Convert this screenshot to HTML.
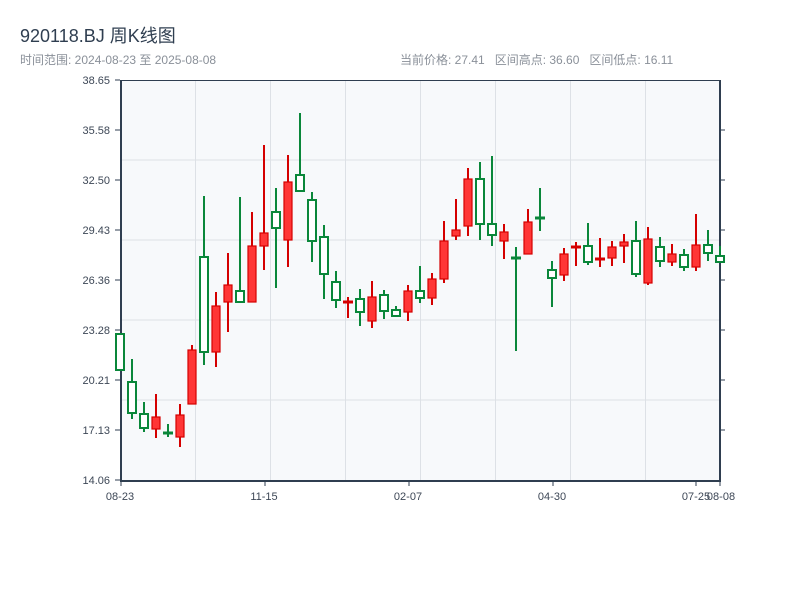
<!DOCTYPE html>
<html><head><meta charset="utf-8"><style>
body{margin:0;background:#fff;width:800px;height:600px;overflow:hidden;font-family:"Liberation Sans","Noto Sans CJK SC",sans-serif}
.t{position:absolute;left:20px;top:22px;font-size:18px;color:#2f3e50}
.s{position:absolute;left:20px;top:51px;font-size:12px;color:#8a9099}
.r{position:absolute;left:400px;top:51px;font-size:12px;color:#8a9099;white-space:pre}
svg{position:absolute;left:0;top:0}
</style></head><body>
<div class="t">920118.BJ 周K线图</div>
<div class="s">时间范围: 2024-08-23 至 2025-08-08</div>
<div class="r">当前价格: 27.41   区间高点: 36.60   区间低点: 16.11</div>
<svg width="800" height="600" font-family="Liberation Sans, sans-serif" font-size="11" fill="#3d4756">
<rect x="120" y="80" width="600" height="400" fill="#f7f9fb"/>
<g stroke="#dde1e6" stroke-width="1">
<line x1="120" y1="160" x2="720" y2="160"/><line x1="120" y1="240" x2="720" y2="240"/><line x1="120" y1="320" x2="720" y2="320"/><line x1="120" y1="400" x2="720" y2="400"/>
<line x1="195.5" y1="80" x2="195.5" y2="480"/><line x1="270.5" y1="80" x2="270.5" y2="480"/><line x1="345.5" y1="80" x2="345.5" y2="480"/><line x1="420.5" y1="80" x2="420.5" y2="480"/><line x1="495.5" y1="80" x2="495.5" y2="480"/><line x1="570.5" y1="80" x2="570.5" y2="480"/><line x1="645.5" y1="80" x2="645.5" y2="480"/>
</g>
<g stroke="#2f3e50" stroke-width="2" fill="none">
<line x1="121" y1="80" x2="121" y2="481"/><line x1="120" y1="481" x2="721" y2="481"/><line x1="720" y1="80" x2="720" y2="481"/>
<line x1="120" y1="80.5" x2="720" y2="80.5" stroke-width="1"/>
</g>
<g stroke="#2f3e50" stroke-width="1">
<line x1="115" y1="80" x2="120" y2="80"/><line x1="115" y1="130" x2="120" y2="130"/><line x1="115" y1="180" x2="120" y2="180"/><line x1="115" y1="230" x2="120" y2="230"/><line x1="115" y1="280" x2="120" y2="280"/><line x1="115" y1="330" x2="120" y2="330"/><line x1="115" y1="380" x2="120" y2="380"/><line x1="115" y1="430" x2="120" y2="430"/><line x1="115" y1="480" x2="120" y2="480"/>
<line x1="720" y1="130" x2="725" y2="130"/><line x1="720" y1="180" x2="725" y2="180"/><line x1="720" y1="230" x2="725" y2="230"/><line x1="720" y1="280" x2="725" y2="280"/><line x1="720" y1="330" x2="725" y2="330"/><line x1="720" y1="380" x2="725" y2="380"/><line x1="720" y1="430" x2="725" y2="430"/>
<line x1="121" y1="481" x2="121" y2="486"/><line x1="265" y1="481" x2="265" y2="486"/><line x1="409" y1="481" x2="409" y2="486"/><line x1="553" y1="481" x2="553" y2="486"/><line x1="696" y1="481" x2="696" y2="486"/><line x1="720" y1="481" x2="720" y2="486"/>
</g>
<g text-anchor="end">
<text x="110" y="84">38.65</text><text x="110" y="134">35.58</text><text x="110" y="184">32.50</text><text x="110" y="234">29.43</text><text x="110" y="284">26.36</text><text x="110" y="334">23.28</text><text x="110" y="384">20.21</text><text x="110" y="434">17.13</text><text x="110" y="484">14.06</text>
</g>
<g text-anchor="middle">
<text x="120" y="500">08-23</text><text x="264" y="500">11-15</text><text x="408" y="500">02-07</text><text x="552" y="500">04-30</text><text x="696" y="500">07-25</text><text x="721" y="500">08-08</text>
</g>
</svg>
<svg width="800" height="600"></svg>
<script>
var d=[[120,'g',334,370,334,370],[132,'g',382,413,359,419],[144,'g',414,428,402,432],[156,'r',417,429,394,438],[168,'g',433,433,424,437],[180,'r',415,437,404,447],[192,'r',350,404,345,404],[204,'g',257,352,196,365],[216,'r',306,352,292,367],[228,'r',285,302,253,332],[240,'g',291,302,197,302],[252,'r',246,302,212,302],[264,'r',233,246,145,270],[276,'g',212,228,188,288],[288,'r',182,240,155,267],[300,'g',175,191,113,191],[312,'g',200,241,192,262],[324,'g',237,274,225,299],[336,'g',282,300,271,308],[348,'r',302,302,297,318],[360,'g',299,312,289,326],[372,'r',297,321,281,328],[384,'g',295,311,290,319],[396,'g',310,316,306,316],[408,'r',291,312,285,321],[420,'g',291,298,266,303],[432,'r',279,298,273,305],[444,'r',241,279,221,283],[456,'r',230,236,199,240],[468,'r',179,226,168,236],[480,'g',179,224,162,240],[492,'g',224,235,156,246],[504,'r',232,241,224,259],[516,'g',258,258,247,351],[528,'r',222,254,209,254],[540,'g',218,218,188,231],[552,'g',270,278,261,307],[564,'r',254,275,248,281],[576,'r',247,247,242,266],[588,'g',246,262,223,265],[600,'r',259,259,238,267],[612,'r',247,258,241,266],[624,'r',242,246,234,263],[636,'g',241,274,221,277],[648,'r',239,283,227,285],[660,'g',247,261,237,267],[672,'r',254,262,244,266],[684,'g',255,267,249,271],[696,'r',245,267,214,271],[708,'g',245,253,230,261],[720,'g',256,262,246,262]];
var s='';
d.forEach(function(c){var x=c[0],g=c[1]=='g',col=g?'#0a873a':'#d40000';
s+='<line x1="'+x+'" y1="'+c[4]+'" x2="'+x+'" y2="'+c[5]+'" stroke="'+col+'" stroke-width="2"/>';
if(c[3]-c[2]<2){s+='<rect x="'+(x-5)+'" y="'+(c[2]-1.5)+'" width="10" height="3" fill="'+col+'"/>';}
else if(g){s+='<rect x="'+(x-4)+'" y="'+c[2]+'" width="8" height="'+(c[3]-c[2])+'" fill="#fff" stroke="'+col+'" stroke-width="2"/>';}
else{s+='<rect x="'+(x-4)+'" y="'+c[2]+'" width="8" height="'+(c[3]-c[2])+'" fill="#ff3636" stroke="'+col+'" stroke-width="1.2"/>';}
});
document.querySelectorAll('svg')[1].innerHTML=s;
</script>
</body></html>
